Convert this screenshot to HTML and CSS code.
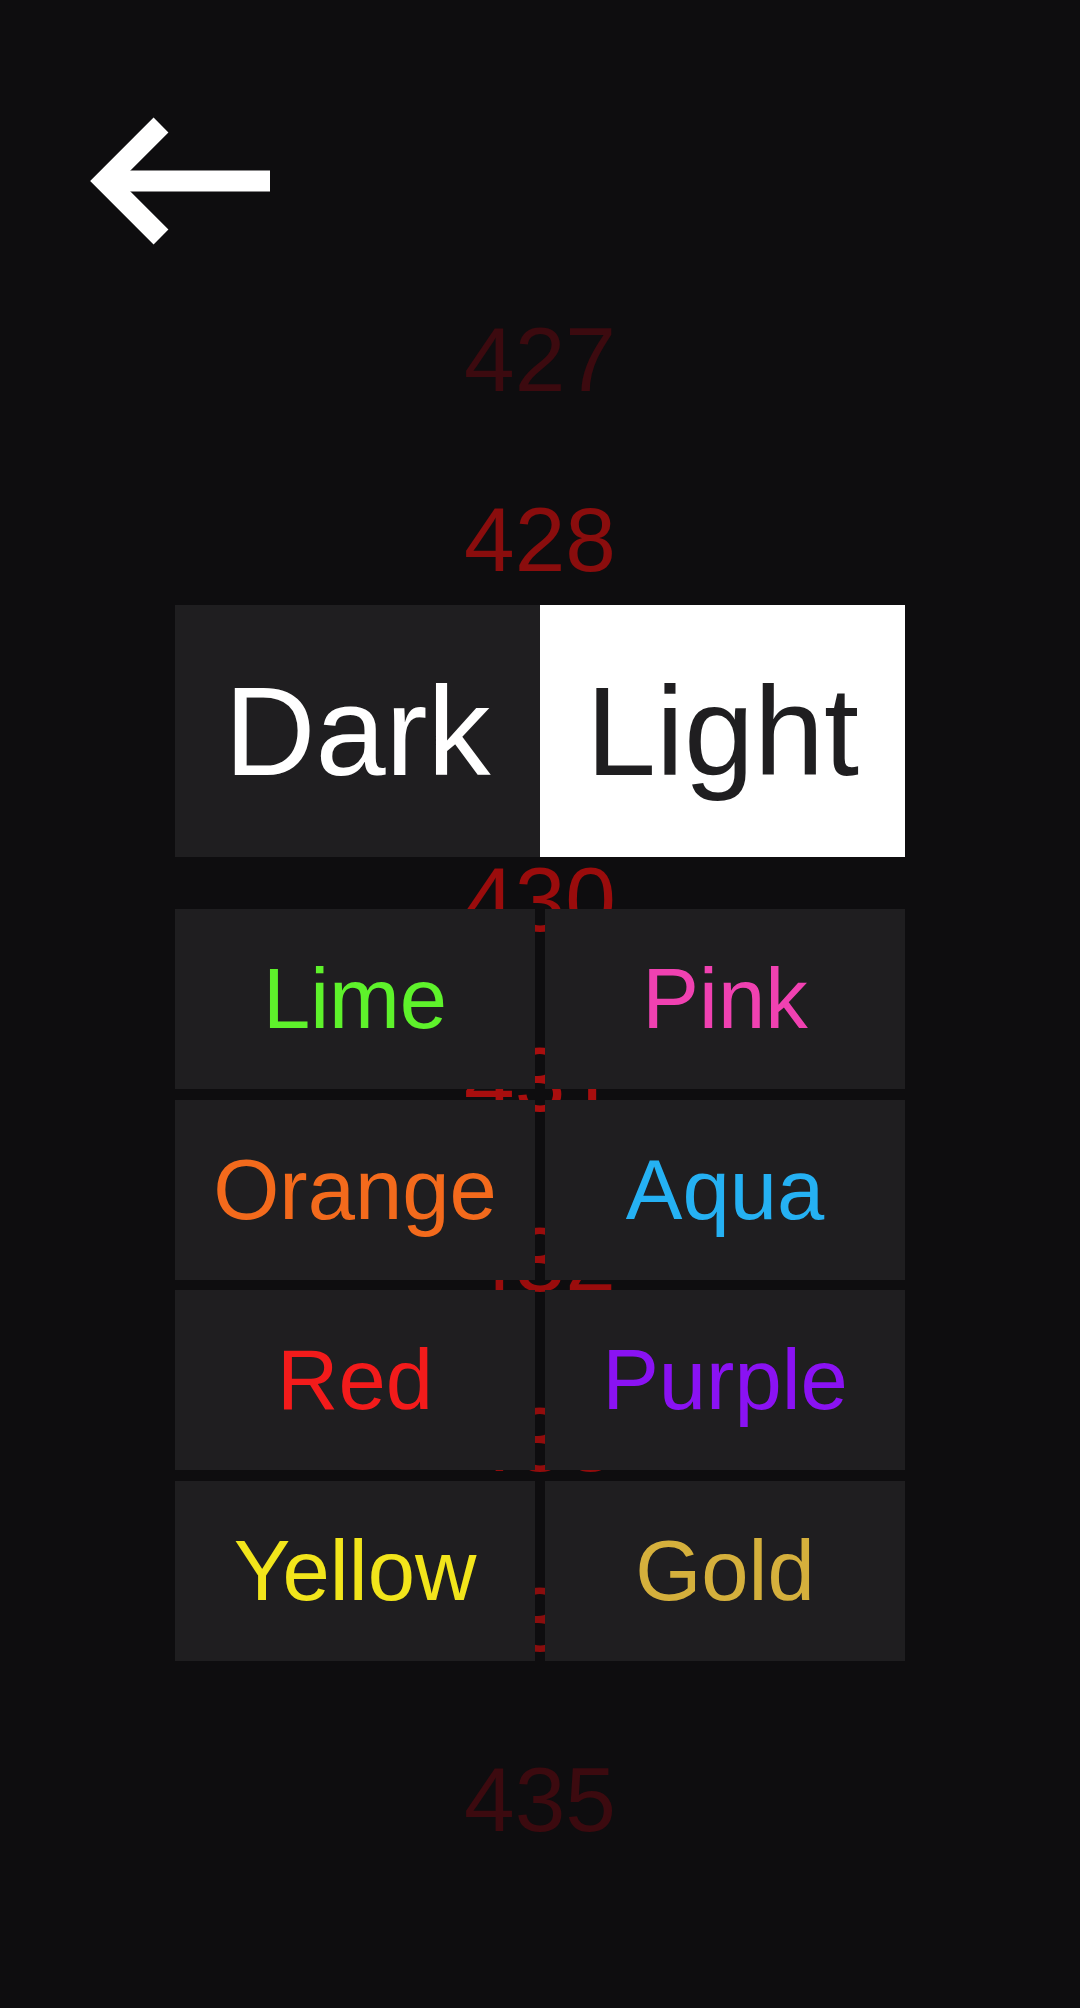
FILE: index.html
```html
<!DOCTYPE html>
<html lang="en">
<head>
<meta charset="utf-8">
<title>Theme</title>
<link rel="stylesheet" href="styles.css">
</head>
<body>
<div class="screen">
  <header class="header">
    <svg class="back" width="200" height="145" viewBox="0 0 200 145" aria-label="Back">
      <polyline points="81,15 25,71 81,127" fill="none" stroke="#ffffff" stroke-width="21" stroke-linejoin="miter" stroke-linecap="butt"/>
      <line x1="38" y1="71" x2="190" y2="71" stroke="#ffffff" stroke-width="21" stroke-linecap="butt"/>
    </svg>
  </header>

  <div class="picker">
    <div class="num n4">427</div>
    <div class="num n3">428</div>
    <div class="num n2">429</div>
    <div class="num n1">430</div>
    <div class="num n0">431</div>
    <div class="num n1">432</div>
    <div class="num n2">433</div>
    <div class="num n3">434</div>
    <div class="num n4">435</div>
  </div>

  <div class="overlay">
    <div class="toggle">
      <div class="mode mode-dark">Dark</div>
      <div class="mode mode-light">Light</div>
    </div>
    <div class="colors">
      <div class="swatch c-lime">Lime</div>
      <div class="swatch c-pink">Pink</div>
      <div class="swatch c-orange">Orange</div>
      <div class="swatch c-aqua">Aqua</div>
      <div class="swatch c-red">Red</div>
      <div class="swatch c-purple">Purple</div>
      <div class="swatch c-yellow">Yellow</div>
      <div class="swatch c-gold">Gold</div>
    </div>
  </div>
</div>
</body>
</html>
```
FILE: styles.css
```css
html, body {
  margin: 0;
  padding: 0;
  background: #0e0d0f;
}

body {
  font-family: "Liberation Sans", Arial, sans-serif;
}

.screen {
  position: relative;
  width: 1080px;
  height: 2008px;
  overflow: hidden;
  background: #0e0d0f;
}

.header {
  height: 270px;
  box-sizing: border-box;
  padding-top: 110px;
  padding-left: 80px;
}

.back {
  display: block;
}

.picker {
  display: flex;
  flex-direction: column;
}

.num {
  height: 180px;
  line-height: 180px;
  font-size: 91px;
  text-align: center;
}

.n0 { color: #a80e0e; }
.n1 { color: #9a0c0c; }
.n2 { color: #920c0c; }
.n3 { color: #8a0d0d; }
.n4 { color: #3c0a0f; }

.overlay {
  position: absolute;
  top: 605px;
  left: 175px;
  width: 730px;
  display: flex;
  flex-direction: column;
  gap: 52px;
}

.toggle {
  display: grid;
  grid-template-columns: 1fr 1fr;
  height: 252px;
}

.mode {
  display: flex;
  align-items: center;
  justify-content: center;
  font-size: 126px;
}

.mode-dark {
  background: #1f1e20;
  color: #ffffff;
}

.mode-light {
  background: #ffffff;
  color: #1f1e20;
}

.colors {
  display: grid;
  grid-template-columns: 1fr 1fr;
  grid-auto-rows: 180px;
  column-gap: 10px;
  row-gap: 10.67px;
}

.swatch {
  background: #1f1e20;
  display: flex;
  align-items: center;
  justify-content: center;
  font-size: 85px;
}

.c-lime { color: #5ef22b; }
.c-pink { color: #f041b1; }
.c-orange { color: #f36a1c; }
.c-aqua { color: #25b1f3; }
.c-red { color: #f31b1b; }
.c-purple { color: #8a12f3; }
.c-yellow { color: #f2e51b; }
.c-gold { color: #d5b03c; }
```
